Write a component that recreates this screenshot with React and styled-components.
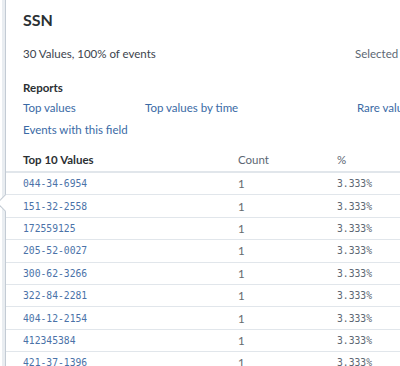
import styled, { createGlobalStyle } from 'styled-components';

const GlobalStyle = createGlobalStyle`
    html, body {
        margin: 0;
        padding: 0;
        background: #ffffff;
        overflow: hidden;
    }
    body {
        font-family: Lato, "Open Sans", sans-serif;
        color: #3c444d;
    }
`

const Page = styled.div`
    width: 400px;
    height: 366px;
    padding-left: 2px;
    box-sizing: border-box;
    display: flex;
    overflow: hidden;
`

const Popover = styled.div`
    position: relative;
    flex: 1;
    margin-left: 3px;
    border-left: 1px solid #c3cbd4;
    box-shadow: -3px 0 0 #e9edf1;
    background: #fff;
    min-width: 0;

    &::before {
        content: '';
        position: absolute;
        left: -7px;
        top: 197px;
        width: 11px;
        height: 11px;
        background: #fff;
        border-left: 1px solid #c3cbd4;
        border-bottom: 1px solid #c3cbd4;
        transform: rotate(45deg);
    }
`

const Header = styled.div`
    padding: 10px 0 0 17px;
`

const Title = styled.h2`
    margin: 0;
    font-size: 16px;
    line-height: 20px;
    font-weight: 700;
    color: #2b3033;
`

const Summary = styled.div`
    display: grid;
    grid-template-columns: 332px auto;
    margin-top: 14px;
    font-size: 11.5px;
    line-height: 20px;
    color: #3c444d;
    white-space: nowrap;
`

const Muted = styled.span`
    color: #5c6773;
`

const Section = styled.div`
    margin-top: 14px;
`

const SectionTitle = styled.div`
    font-size: 11.5px;
    font-weight: 700;
    line-height: 20px;
    color: #2b3033;
`

const LinkGrid = styled.div`
    display: grid;
    grid-template-columns: 122px 212px 100px;
    row-gap: 2px;
    white-space: nowrap;
`

const Link = styled.a`
    font-size: 11.5px;
    line-height: 20px;
    color: #3a6aa5;
    text-decoration: none;
    cursor: pointer;
`

const Table = styled.div`
    margin-top: 8px;
`

const Row = styled.div`
    display: grid;
    grid-template-columns: 215px 99px 1fr;
    height: ${p => (p.head ? '25px' : '22.4px')};
    align-items: center;
    border-bottom: ${p => (p.head ? '2px' : '1px')} solid #e1e6eb;
    box-sizing: border-box;
    white-space: nowrap;
`

const HeadCell = styled.div`
    padding-left: 17px;
    font-size: 11.5px;
    font-weight: ${p => (p.bold ? 700 : 400)};
    color: ${p => (p.bold ? '#2b3033' : '#5c6773')};
`

const ValueCell = styled.div`
    padding-left: 17px;
    font-family: "DejaVu Sans Mono", monospace;
    font-size: 9.7px;
    color: #4a72a8;
`

const CountCell = styled.div`
    padding-left: 17px;
    font-size: 11.5px;
    color: #666a6e;
`

const PctCell = styled.div`
    padding-left: 17px;
    font-family: "DejaVu Sans Mono", monospace;
    font-size: 9.7px;
    color: #5c6773;
`

const values = [
    '044-34-6954',
    '151-32-2558',
    '172559125',
    '205-52-0027',
    '300-62-3266',
    '322-84-2281',
    '404-12-2154',
    '412345384',
    '421-37-1396',
    '450-22-1190',
];

export default function App() {
    return (
        <>
            <GlobalStyle />
            <Page>
                <Popover>
                    <Header>
                        <Title>SSN</Title>
                        <Summary>
                            <span>30 Values, 100% of events</span>
                            <Muted>Selected</Muted>
                        </Summary>
                        <Section>
                            <SectionTitle>Reports</SectionTitle>
                            <LinkGrid>
                                <Link>Top values</Link>
                                <Link>Top values by time</Link>
                                <Link>Rare values</Link>
                                <Link>Events with this field</Link>
                            </LinkGrid>
                        </Section>
                    </Header>
                    <Table>
                        <Row head>
                            <HeadCell bold>Top 10 Values</HeadCell>
                            <HeadCell>Count</HeadCell>
                            <HeadCell>%</HeadCell>
                        </Row>
                        {values.map(v => (
                            <Row key={v}>
                                <ValueCell>{v}</ValueCell>
                                <CountCell>1</CountCell>
                                <PctCell>3.333%</PctCell>
                            </Row>
                        ))}
                    </Table>
                </Popover>
            </Page>
        </>
    );
}
